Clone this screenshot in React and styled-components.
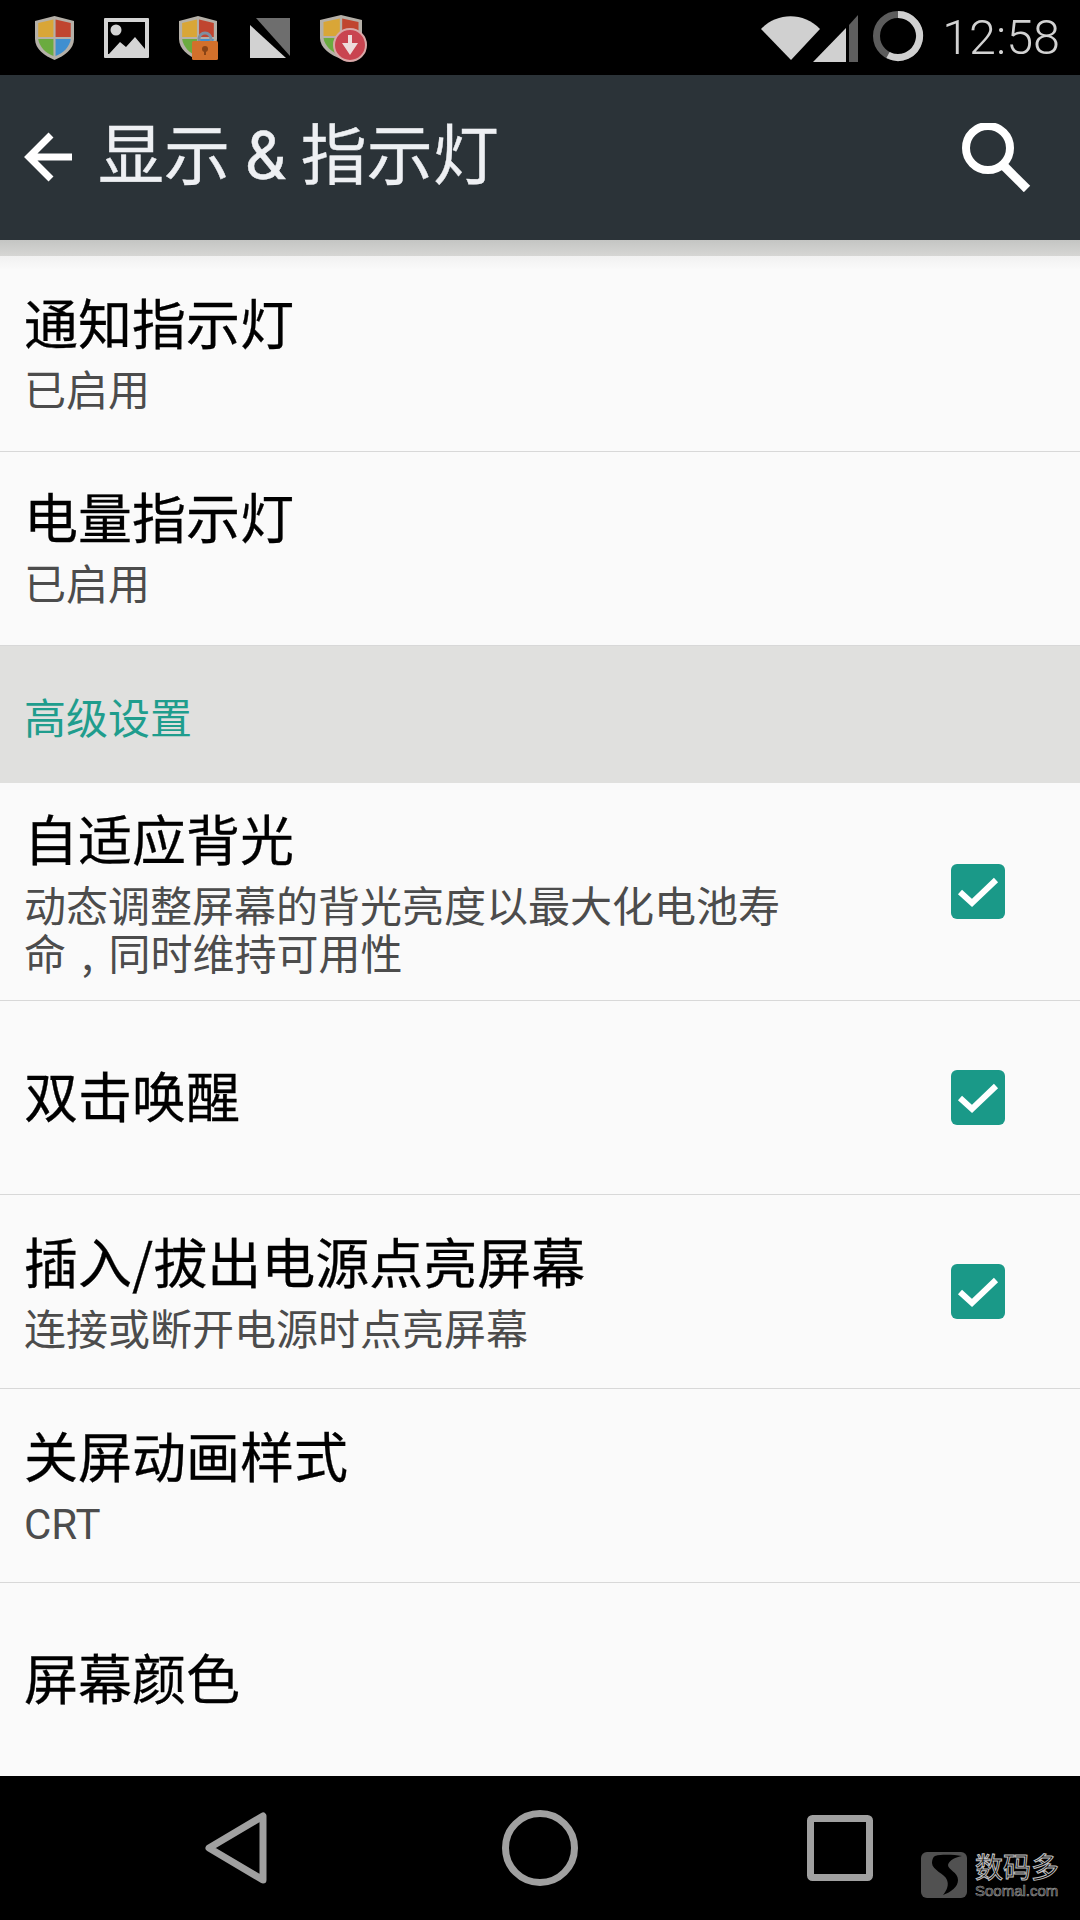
import styled, { createGlobalStyle } from 'styled-components';

const cjk = '"Noto Sans CJK SC", "Noto Sans", sans-serif';

const GlobalStyle = createGlobalStyle`
  html, body {
    margin: 0;
    padding: 0;
    background: #000;
  }
`;

const Screen = styled.div`
  width: 1080px;
  height: 1920px;
  position: relative;
  overflow: hidden;
  display: flex;
  flex-direction: column;
  background: #fafafa;
  font-family: ${cjk};
`;

const StatusBar = styled.div`
  height: 75px;
  flex: none;
  background: #000;
  display: flex;
  justify-content: space-between;
  align-items: center;
  padding: 0 20px 0 35px;
`;

const StatusGroup = styled.div`
  display: flex;
  align-items: center;
  gap: ${(p) => p.$gap}px;
`;

const Slot = styled.div`
  display: flex;
  margin-left: ${(p) => p.$ml || 0}px;
  margin-bottom: ${(p) => p.$mb || 0}px;
`;

const BadgeWrap = styled.div`
  position: relative;
  width: ${(p) => p.$w}px;
  height: ${(p) => p.$h}px;
`;

const Badge = styled.svg`
  position: absolute;
  left: ${(p) => p.$left}px;
  top: ${(p) => p.$top}px;
`;

const Clock = styled.span`
  font-family: Roboto, sans-serif;
  font-weight: 300;
  font-size: 48.5px;
  line-height: 75px;
  color: #d2d2d2;
  margin-left: 18px;
`;

const Toolbar = styled.div`
  height: 165px;
  flex: none;
  background: #2b3338;
  display: flex;
  align-items: center;
  padding: 0 49px 0 24px;
  position: relative;
  z-index: 1;
`;

const ToolbarTitle = styled.h1`
  margin: 0 0 8px 26px;
  flex: 1;
  font-size: 66px;
  font-weight: 400;
  line-height: 100px;
  color: #eef0f3;
  white-space: nowrap;
  -webkit-text-stroke: 0.4px #eef0f3;
`;

const Amp = styled.span`
  font-family: Roboto, sans-serif;
  font-weight: 400;
`;

const List = styled.div`
  flex: 1;
  position: relative;
  display: flex;
  flex-direction: column;
`;

const Shadow = styled.div`
  position: absolute;
  left: 0;
  right: 0;
  top: 0;
  height: 30px;
  background: linear-gradient(#c4c5c3 0, #d6d6d4 16px, #f1f1f1 16px, #fafafa 30px);
`;

const Row = styled.div`
  height: ${(p) => p.$h}px;
  flex: none;
  box-sizing: border-box;
  display: flex;
  align-items: center;
  justify-content: space-between;
  padding: 0 75px 0 24px;
  border-bottom: ${(p) => (p.$last ? 'none' : '1px solid #d8d8d8')};
`;

const RowText = styled.div`
  display: flex;
  flex-direction: column;
  width: 770px;
  padding-top: ${(p) => p.$top || 0}px;
  padding-bottom: ${(p) => p.$lift || 0}px;
`;

const Title = styled.div`
  font-size: 54px;
  line-height: 70px;
  color: #000;
  -webkit-text-stroke: 0.3px #000;
`;

const Summary = styled.div`
  font-size: 42px;
  line-height: 48px;
  margin-top: 7px;
  color: #4c4c4c;
  word-spacing: 6px;
`;

const Latin = styled.span`
  font-family: Roboto, sans-serif;
`;

const SectionHeader = styled.div`
  height: 137px;
  flex: none;
  box-sizing: border-box;
  display: flex;
  align-items: center;
  padding: 2px 0 0 24px;
  background: #e0e0de;
  color: #1f9d8d;
  font-size: 42px;
`;

const Checkbox = styled.div`
  width: 54px;
  height: 55px;
  flex: none;
  border-radius: 6px;
  background: #1a9988;
  display: flex;
  align-items: center;
  justify-content: center;
`;

const NavBar = styled.div`
  height: 144px;
  flex: none;
  background: #000;
  display: grid;
  grid-template-columns: 205px 63px 234px 78px 227px 66px;
  align-items: center;
`;

const Cell = styled.div`
  grid-column: ${(p) => p.$col};
  display: flex;
`;

const Watermark = styled.div`
  position: absolute;
  left: 921px;
  top: 1850px;
  display: flex;
  align-items: flex-start;
  gap: 8px;
  opacity: 0.9;
`;

const MarkText = styled.div`
  display: flex;
  flex-direction: column;
`;

const MarkName = styled.span`
  font-size: 28px;
  line-height: 33px;
  color: #000;
  -webkit-text-stroke: 1px #d8d8d8;
`;

const MarkUrl = styled.span`
  font-family: "Liberation Sans", sans-serif;
  font-size: 15px;
  line-height: 16px;
  color: #222;
  -webkit-text-stroke: 0.6px #b0b0b0;
`;

const LogoSvg = styled.svg`
  flex: none;
  margin-top: 2px;
`;

function ShieldIcon({ width = 39 }) {
  return (
    <svg width={width} height="46" viewBox="2 0 36 46" preserveAspectRatio="none">
      <path d="M20 1 L38 6 V24 C38 34 29 41 20 45 C11 41 2 34 2 24 V6 Z" fill="#b5b0a8" />
      <path d="M19 4.5 V22 H5 V8 Z" fill="#d9a637" />
      <path d="M21 4.5 L35 8 V22 H21 Z" fill="#c0452f" />
      <path d="M19 24 V41 C12 38 6 32 5 24 Z" fill="#6bab3f" />
      <path d="M21 24 H35 C34 32 28 38 21 41 Z" fill="#3f8fd0" />
    </svg>
  );
}

function PictureIcon() {
  return (
    <svg width="45" height="40" viewBox="0 0 45 40">
      <path fill="#d4d4d4" fillRule="evenodd" d="M1 0 H44 A1 1 0 0 1 45 1 V39 A1 1 0 0 1 44 40 H1 A1 1 0 0 1 0 39 V1 A1 1 0 0 1 1 0 Z M4 4 V36 H41 V4 Z" />
      <circle cx="12" cy="12" r="5.5" fill="#d4d4d4" />
      <path fill="#d4d4d4" d="M5 36 L16 24 L22 29 L31 19 L41 31 V36 Z" />
    </svg>
  );
}

function LockedShieldIcon() {
  return (
    <BadgeWrap $w={38} $h={46}>
      <ShieldIcon width={38} />
      <Badge $left={13} $top={16} width="26" height="30" viewBox="0 0 26 30">
        <path d="M7 12 V8 A6 6 0 0 1 19 8 V12" fill="none" stroke="#7f8fa0" strokeWidth="3" />
        <rect x="0" y="10" width="26" height="19" rx="1.5" fill="#d2702b" />
        <circle cx="13" cy="18" r="3" fill="#8a4416" />
        <rect x="12" y="19" width="2" height="5" fill="#8a4416" />
      </Badge>
    </BadgeWrap>
  );
}

function NoSimIcon() {
  return (
    <Slot $ml={3}>
      <svg width="40" height="40" viewBox="0 0 40 40">
        <path d="M6 0 H40 V38 Z" fill="#6e6e6e" />
        <path d="M0 7 L36 40 H0 Z" fill="#d2d2d2" />
      </svg>
    </Slot>
  );
}

function DownloadShieldIcon() {
  return (
    <BadgeWrap $w={48} $h={48}>
      <ShieldIcon width={42} />
      <Badge $left={13} $top={14} width="34" height="34" viewBox="0 0 34 34">
        <circle cx="17" cy="17" r="16" fill="#c94450" stroke="#d8a8a8" strokeWidth="2" />
        <path d="M15 7 H19 V15 L25 15 L17 27 L9 15 L15 15 Z" fill="#eddcdc" />
      </Badge>
    </BadgeWrap>
  );
}

function WifiIcon() {
  return (
    <svg width="59" height="44" viewBox="0 0 59 44">
      <path d="M0 13 C16 -4 43 -4 59 13 L30 44 Z" fill="#d0d0d0" />
    </svg>
  );
}

function SignalIcon() {
  return (
    <svg width="45" height="48" viewBox="0 0 45 48">
      <path d="M0 48 L33 14 V48 Z" fill="#d0d0d0" />
      <path d="M36 11 L45 1 V48 H36 Z" fill="#5e5e5e" />
    </svg>
  );
}

function BatteryRing() {
  return (
    <svg width="52" height="52" viewBox="0 0 52 52">
      <circle cx="26" cy="26" r="21.5" fill="none" stroke="#5c5c5c" strokeWidth="7" />
      <path d="M26 4.5 A21.5 21.5 0 1 1 16 45" fill="none" stroke="#d0d0d0" strokeWidth="7" />
    </svg>
  );
}

function BackArrow() {
  return (
    <Slot $mb={2}>
      <svg width="48" height="50" viewBox="0 0 48 50">
        <path d="M48 25 H6 M27 3 L5 25 L27 47" fill="none" stroke="#fff" strokeWidth="7" />
      </svg>
    </Slot>
  );
}

function SearchIcon() {
  return (
    <svg width="69" height="69" viewBox="0 0 69 69">
      <circle cx="26" cy="25" r="22" fill="none" stroke="#fff" strokeWidth="8" />
      <path d="M42 43 L65 66" fill="none" stroke="#fff" strokeWidth="9" />
    </svg>
  );
}

function CheckMark() {
  return (
    <svg width="42" height="32" viewBox="0 0 42 32">
      <path d="M3 16 L15 27 L39 4" fill="none" stroke="#fff" strokeWidth="6" />
    </svg>
  );
}

function LogoMark() {
  return (
    <LogoSvg width="46" height="46" viewBox="0 0 46 46">
      <rect width="46" height="46" rx="6" fill="#5a5a5a" />
      <path d="M14 4 C22 2 33 3 41 4 C35 5 28 8 27 13 C27 18 37 20 37 28 C37 35 30 40 22 43 C26 38 28 33 26 28 C24 22 11 18 11 11 C11 8 12 5 14 4 Z" fill="#000" />
    </LogoSvg>
  );
}

function App() {
  return (
    <Screen>
      <GlobalStyle />
      <StatusBar>
        <StatusGroup $gap={30}>
          <ShieldIcon />
          <PictureIcon />
          <LockedShieldIcon />
          <NoSimIcon />
          <DownloadShieldIcon />
        </StatusGroup>
        <StatusGroup $gap={0}>
          <WifiIcon />
          <Slot $ml={-7}>
            <SignalIcon />
          </Slot>
          <Slot $ml={14} $mb={3}>
            <BatteryRing />
          </Slot>
          <Clock>12:58</Clock>
        </StatusGroup>
      </StatusBar>

      <Toolbar>
        <BackArrow />
        <ToolbarTitle>显示 <Amp>&amp;</Amp> 指示灯</ToolbarTitle>
        <SearchIcon />
      </Toolbar>

      <List>
        <Shadow />
        <Row $h={212}>
          <RowText $top={18} $lift={10}>
            <Title>通知指示灯</Title>
            <Summary>已启用</Summary>
          </RowText>
        </Row>
        <Row $h={194}>
          <RowText $lift={10}>
            <Title>电量指示灯</Title>
            <Summary>已启用</Summary>
          </RowText>
        </Row>
        <SectionHeader>高级设置</SectionHeader>
        <Row $h={218}>
          <RowText $lift={4}>
            <Title>自适应背光</Title>
            <Summary>动态调整屏幕的背光亮度以最大化电池寿命 , 同时维持可用性</Summary>
          </RowText>
          <Checkbox><CheckMark /></Checkbox>
        </Row>
        <Row $h={194}>
          <RowText $lift={5}>
            <Title>双击唤醒</Title>
          </RowText>
          <Checkbox><CheckMark /></Checkbox>
        </Row>
        <Row $h={194}>
          <RowText $lift={6}>
            <Title>插入/拔出电源点亮屏幕</Title>
            <Summary>连接或断开电源时点亮屏幕</Summary>
          </RowText>
          <Checkbox><CheckMark /></Checkbox>
        </Row>
        <Row $h={194}>
          <RowText $lift={3}>
            <Title>关屏动画样式</Title>
            <Summary><Latin>CRT</Latin></Summary>
          </RowText>
        </Row>
        <Row $h={193} $last>
          <RowText $lift={5}>
            <Title>屏幕颜色</Title>
          </RowText>
        </Row>
      </List>

      <NavBar>
        <Cell $col={2}>
          <svg width="63" height="72" viewBox="0 0 63 72">
            <path d="M4 36 L58 4 V68 Z" fill="none" stroke="#a0a0a0" strokeWidth="7" strokeLinejoin="round" />
          </svg>
        </Cell>
        <Cell $col={4}>
          <svg width="76" height="76" viewBox="0 0 76 76">
            <circle cx="38" cy="38" r="34.5" fill="none" stroke="#a0a0a0" strokeWidth="7" />
          </svg>
        </Cell>
        <Cell $col={6}>
          <svg width="66" height="66" viewBox="0 0 66 66">
            <rect x="3.5" y="3.5" width="59" height="59" rx="2" fill="none" stroke="#a0a0a0" strokeWidth="7" />
          </svg>
        </Cell>
      </NavBar>

      <Watermark>
        <LogoMark />
        <MarkText>
          <MarkName>数码多</MarkName>
          <MarkUrl>Soomal.com</MarkUrl>
        </MarkText>
      </Watermark>
    </Screen>
  );
}

export default App;
